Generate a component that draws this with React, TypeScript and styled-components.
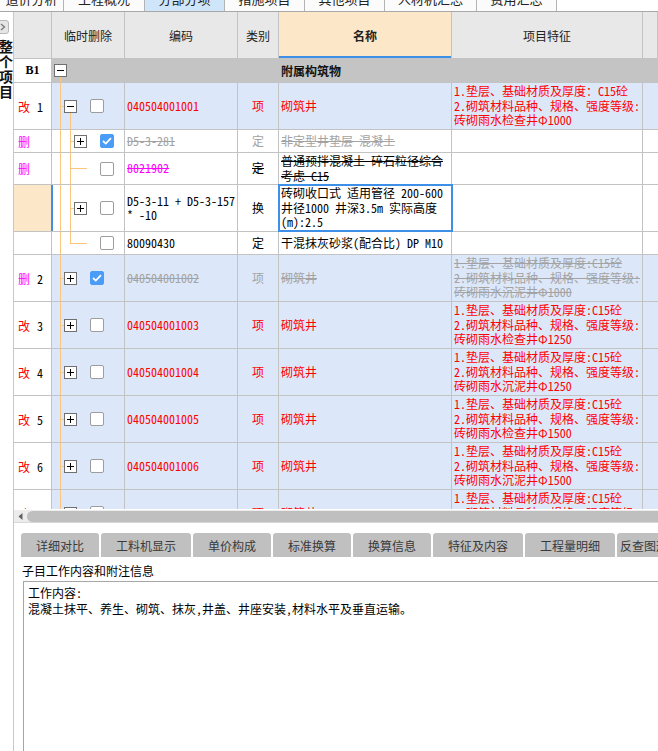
import React from 'react';
import styled, { createGlobalStyle } from 'styled-components';

// CONSTANTS //
const C = {
    line: '#c3c3c3',
    head: '#e8e8e8',
    rowBlue: '#dce8fa',
    peach: '#fde7c9',
    group: '#c4c4c4',
    red: '#ff0000',
    magenta: '#ff00ff',
    gray: '#a3a3a3',
    black: '#000000',
    blue: '#3d8fe8',
    tree: '#fcc77d',
};

const CELL_FONT = '"Noto Sans Mono CJK SC", "Liberation Mono", "Noto Sans CJK SC", monospace';
const UI_FONT = '"Noto Sans CJK SC", "Noto Sans", sans-serif';

type Tone = 'red' | 'gray' | 'black' | 'magenta';
type Tree = 'open' | 'child' | 'leaf' | 'lastLeaf' | 'closed';

interface Row {
    status?: '改' | '删';
    num?: string;
    tree: Tree;
    checked?: boolean;
    code: string[];
    codeTone: Tone;
    type: string;
    typeStrike?: boolean;
    name: string[];
    feat: string[];
    tone: Tone;
    strike?: boolean;
    height: number;
    blue?: boolean;
    current?: boolean;
}

const featLines = (well: string, size: string, full?: boolean) => [
    full ? '1.垫层、基础材质及厚度：C15砼' : '1.垫层、基础材质及厚度:C15砼',
    '2.砌筑材料品种、规格、强度等级:',
    `砖砌雨水${well}井Φ${size}`,
];

const ROWS: Row[] = [
    {
        status: '改', num: '1', tree: 'open', code: ['040504001001'], codeTone: 'red', type: '项',
        name: ['砌筑井'], feat: featLines('检查', '1000', true), tone: 'red', height: 47, blue: true,
    },
    {
        status: '删', tree: 'child', checked: true, code: ['D5-3-281'], codeTone: 'gray', type: '定',
        name: ['非定型井垫层 混凝土'], feat: [], tone: 'gray', strike: true, height: 23,
    },
    {
        status: '删', tree: 'leaf', code: ['8021902'], codeTone: 'magenta', type: '定', typeStrike: true,
        name: ['普通预拌混凝土 碎石粒径综合', '考虑 C15'], feat: [], tone: 'black', strike: true, height: 32,
    },
    {
        tree: 'child', code: ['D5-3-11 + D5-3-157', '* -10'], codeTone: 'black', type: '换',
        name: ['砖砌收口式 适用管径 200-600', '井径1000 井深3.5m  实际高度', '(m):2.5'], feat: [],
        tone: 'black', height: 47, current: true,
    },
    {
        tree: 'lastLeaf', code: ['80090430'], codeTone: 'black', type: '定',
        name: ['干混抹灰砂浆(配合比) DP M10'], feat: [], tone: 'black', height: 23,
    },
    {
        status: '删', num: '2', tree: 'closed', checked: true, code: ['040504001002'], codeTone: 'gray', type: '项',
        name: ['砌筑井'], feat: featLines('沉泥', '1000'), tone: 'gray', strike: true, height: 47, blue: true,
    },
    ...[
        ['3', '检查', '1250'],
        ['4', '沉泥', '1250'],
        ['5', '检查', '1500'],
        ['6', '沉泥', '1500'],
        ['7', '检查', '2000'],
    ].map(([num, well, size]): Row => ({
        status: '改', num, tree: 'closed', code: [`04050400100${num}`], codeTone: 'red', type: '项',
        name: ['砌筑井'], feat: featLines(well, size), tone: 'red', height: 47, blue: true,
    })),
];

const TOP_TABS = [
    { label: '造价分析', width: 64 },
    { label: '工程概况', width: 81 },
    { label: '分部分项', width: 80, active: true },
    { label: '措施项目', width: 80 },
    { label: '其他项目', width: 80 },
    { label: '人材机汇总', width: 92 },
    { label: '费用汇总', width: 80 },
];

const DETAIL_TABS = [
    { label: '详细对比', width: 78 },
    { label: '工料机显示', width: 90 },
    { label: '单价构成', width: 78 },
    { label: '标准换算', width: 78 },
    { label: '换算信息', width: 78 },
    { label: '特征及内容', width: 90 },
    { label: '工程量明细', width: 90 },
    { label: '反查图形工程量', width: 90 },
];

// tree connector lines drawn as cell backgrounds
const treeLines = (kind: Tree | 'group') => {
    const v = (x: number, part: 'full' | 'top' | 'bottom') =>
        `linear-gradient(${C.tree}, ${C.tree}) ${x}px ${part === 'bottom' ? '100%' : '0'} / 1px ${part === 'full' ? '100%' : '50%'} no-repeat`;
    const h = (x: number, w: number) => `linear-gradient(${C.tree}, ${C.tree}) ${x}px 50% / ${w}px 1px no-repeat`;
    switch (kind) {
        case 'group':
            return [v(8, 'bottom')];
        case 'open':
            return [v(8, 'full'), h(8, 4), v(18, 'bottom')];
        case 'child':
            return [v(8, 'full'), v(18, 'full'), h(18, 4)];
        case 'leaf':
            return [v(8, 'full'), v(18, 'full'), h(18, 17)];
        case 'lastLeaf':
            return [v(8, 'full'), v(18, 'top'), h(18, 17)];
        default:
            return [v(8, 'full'), h(8, 4)];
    }
};

const ExpandBox: React.FC<{ open?: boolean }> = ({ open }) => (
    <BoxIcon width="13" height="13" viewBox="0 0 13 13">
        <rect x="0.5" y="0.5" width="12" height="12" fill="#fff" stroke="#707070" />
        <path d="M3 6.5h7" stroke="#000" />
        {!open && <path d="M6.5 3v7" stroke="#000" />}
    </BoxIcon>
);

const Check: React.FC<{ checked?: boolean }> = ({ checked }) => (
    <CheckBox $checked={checked}>
        {checked && (
            <svg width="10" height="8" viewBox="0 0 10 8">
                <path d="M1 4l2.8 2.6L9 1.2" fill="none" stroke="#fff" strokeWidth="1.8" />
            </svg>
        )}
    </CheckBox>
);

const GridRow: React.FC<{ row: Row }> = ({ row }) => {
    const level2 = row.tree !== 'open' && row.tree !== 'closed';
    const hasBox = row.tree === 'open' || row.tree === 'closed' || row.tree === 'child';
    return (
        <RowWrap $height={row.height} $blue={row.blue}>
            <StatusCell $current={row.current}>
                <Status $tone={row.status === '删' ? 'magenta' : 'red'}>{row.status}</Status>
                <RowNum>{row.num}</RowNum>
            </StatusCell>
            <TreeCell $lines={treeLines(row.tree).join(', ')} $indent={level2 ? 22 : 12}>
                {hasBox ? <ExpandBox open={row.tree === 'open'} /> : <BoxSpacer />}
                <Check checked={row.checked} />
            </TreeCell>
            <TextCell>
                <Lines $tone={row.codeTone} $strike={row.strike}>
                    {row.code.map(l => (
                        <div key={l}>{l}</div>
                    ))}
                </Lines>
            </TextCell>
            <TypeCell>
                <Lines $tone={row.tone} $strike={row.typeStrike}>
                    {row.type}
                </Lines>
            </TypeCell>
            <TextCell $selected={row.current}>
                <Lines $tone={row.tone} $strike={row.strike}>
                    {row.name.map(l => (
                        <div key={l}>{l}</div>
                    ))}
                </Lines>
            </TextCell>
            <TextCell>
                <Lines $tone={row.tone} $strike={row.strike}>
                    {row.feat.map(l => (
                        <div key={l}>{l}</div>
                    ))}
                </Lines>
            </TextCell>
            <EndCell />
        </RowWrap>
    );
};

const App: React.FC = () => (
    <>
        <GlobalStyle />
        <Page>
            <TopTabs>
                {TOP_TABS.map(t => (
                    <TopTab key={t.label} $width={t.width} $active={t.active}>
                        <span>{t.label}</span>
                    </TopTab>
                ))}
            </TopTabs>
            <Body>
                <Sidebar>
                    <SideButton>
                        <svg width="6" height="8" viewBox="0 0 6 8">
                            <path d="M1 1l3.5 3L1 7" fill="none" stroke="#777" strokeWidth="1.3" />
                        </svg>
                    </SideButton>
                    <SideTitle>整个项目</SideTitle>
                </Sidebar>
                <Main>
                    <GridView>
                        <HeaderRow>
                            <HeadCell />
                            <HeadCell>临时删除</HeadCell>
                            <HeadCell>编码</HeadCell>
                            <HeadCell>类别</HeadCell>
                            <HeadCell $active>名称</HeadCell>
                            <HeadCell>项目特征</HeadCell>
                            <HeadCell />
                        </HeaderRow>
                        <GroupRow>
                            <GroupCode>B1</GroupCode>
                            <TreeCell $lines={treeLines('group').join(', ')} $indent={2}>
                                <ExpandBox open />
                            </TreeCell>
                            <GroupCell />
                            <GroupCell />
                            <GroupCell>
                                <GroupName>附属构筑物</GroupName>
                            </GroupCell>
                            <GroupCell />
                            <GroupCell />
                        </GroupRow>
                        {ROWS.map((r, i) => (
                            <GridRow key={i} row={r} />
                        ))}
                    </GridView>
                    <HScroll>
                        <ScrollArrow>
                            <svg width="5" height="7" viewBox="0 0 5 7">
                                <path d="M4.5 0v7L0.5 3.5z" fill="#606060" />
                            </svg>
                        </ScrollArrow>
                        <ScrollThumb />
                    </HScroll>
                    <Detail>
                        <DetailTabs>
                            {DETAIL_TABS.map(t => (
                                <DetailTab key={t.label} $width={t.width}>
                                    {t.label}
                                </DetailTab>
                            ))}
                        </DetailTabs>
                        <DetailLabel>子目工作内容和附注信息</DetailLabel>
                        <DetailBox>
                            <div>工作内容:</div>
                            <div>混凝土抹平、养生、砌筑、抹灰,井盖、井座安装,材料水平及垂直运输。</div>
                        </DetailBox>
                    </Detail>
                </Main>
            </Body>
        </Page>
    </>
);

// STYLES //
const GlobalStyle = createGlobalStyle`
    html, body {
        margin: 0;
        padding: 0;
        background: #fff;
    }
    body {
        width: 658px;
        height: 751px;
        overflow: hidden;
        font-family: ${CELL_FONT};
        font-size: 12px;
    }
    * {
        box-sizing: border-box;
    }
`;

const toneColor = (t?: Tone) =>
    t === 'red' ? C.red : t === 'gray' ? C.gray : t === 'magenta' ? C.magenta : C.black;

const Page = styled.div`
    display: flex;
    flex-direction: column;
    width: 658px;
    height: 751px;
    overflow: hidden;
`;

const TopTabs = styled.div`
    display: flex;
    height: 12px;
    flex-shrink: 0;
    border-bottom: 1px solid #a8a8a8;
    overflow: hidden;
`;

const TopTab = styled.div<{ $width: number; $active?: boolean }>`
    width: ${p => p.$width}px;
    flex-shrink: 0;
    display: flex;
    justify-content: center;
    align-items: flex-end;
    overflow: hidden;
    border-right: 1px solid #b4b4b4;
    background: ${p => (p.$active ? '#cfe5fa' : '#fbfbfb')};
    font-family: ${UI_FONT};
    font-size: 13px;
    color: #222;

    span {
        line-height: 20px;
        margin-bottom: 2px;
    }
`;

const Body = styled.div`
    flex: 1;
    display: flex;
    min-height: 0;
`;

const Sidebar = styled.div`
    width: 14px;
    flex-shrink: 0;
    border-right: 1px solid #c8c8c8;
    overflow: hidden;
    display: flex;
    flex-direction: column;
    padding-top: 8px;
`;

const SideButton = styled.div`
    width: 12px;
    height: 14px;
    margin-left: -3px;
    border: 1px solid #b8b8b8;
    border-radius: 3px;
    background: #e6e6e6;
    display: flex;
    align-items: center;
    justify-content: flex-end;
    padding-right: 2px;
`;

const SideTitle = styled.div`
    writing-mode: vertical-rl;
    margin-top: 6px;
    margin-left: -5px;
    font-family: ${UI_FONT};
    font-weight: 700;
    font-size: 14px;
    line-height: 14px;
    letter-spacing: 1px;
    color: #111;
`;

const Main = styled.div`
    flex: 1;
    min-width: 0;
    display: flex;
    flex-direction: column;
`;

const GridView = styled.div`
    height: 497px;
    flex-shrink: 0;
    overflow: hidden;
`;

const COLS = '38px 73px 113px 41px 173px 191px 1fr';

const HeaderRow = styled.div`
    display: grid;
    grid-template-columns: ${COLS};
    height: 47px;
    border-bottom: 1px solid ${C.line};
`;

const HeadCell = styled.div<{ $active?: boolean }>`
    display: flex;
    align-items: center;
    justify-content: center;
    border-right: 1px solid ${C.line};
    background: ${p => (p.$active ? C.peach : C.head)};
    box-shadow: ${p => (p.$active ? `inset 0 -2px 0 ${C.blue}` : 'none')};
    font-family: ${UI_FONT};
    font-size: 12px;
    font-weight: ${p => (p.$active ? 700 : 400)};
    color: #222;
`;

const GroupRow = styled.div`
    display: grid;
    grid-template-columns: ${COLS};
    height: 24px;
    border-bottom: 1px solid ${C.line};
    background: ${C.group};
`;

const GroupCode = styled.div`
    display: flex;
    align-items: center;
    justify-content: center;
    background: #fff;
    border-right: 1px solid ${C.line};
    font-family: 'Liberation Serif', serif;
    font-weight: 700;
    font-size: 12px;
`;

const GroupCell = styled.div`
    display: flex;
    align-items: center;
    padding-left: 2px;
`;

const GroupName = styled.span`
    font-family: ${UI_FONT};
    font-weight: 700;
    font-size: 12px;
    color: #111;
`;

const RowWrap = styled.div<{ $height: number; $blue?: boolean }>`
    display: grid;
    grid-template-columns: ${COLS};
    height: ${p => p.$height}px;
    border-bottom: 1px solid ${C.line};
    background: ${p => (p.$blue ? C.rowBlue : '#fff')};
`;

const StatusCell = styled.div<{ $current?: boolean }>`
    display: flex;
    align-items: center;
    padding-left: 4px;
    background: ${p => (p.$current ? C.peach : '#fff')};
    border-right: ${p => (p.$current ? `2px solid ${C.blue}` : `1px solid ${C.line}`)};
    margin-right: ${p => (p.$current ? '-1px' : '0')};
`;

const Status = styled.span<{ $tone: Tone }>`
    width: 12px;
    color: ${p => toneColor(p.$tone)};
`;

const RowNum = styled.span`
    margin-left: 7px;
    color: #000;
`;

const TreeCell = styled.div<{ $lines: string; $indent: number }>`
    display: flex;
    align-items: center;
    padding-left: ${p => p.$indent}px;
    border-right: 1px solid ${C.line};
    background: ${p => p.$lines};
`;

const BoxIcon = styled.svg`
    display: block;
    flex-shrink: 0;
`;

const BoxSpacer = styled.span`
    width: 13px;
    flex-shrink: 0;
`;

const CheckBox = styled.span<{ $checked?: boolean }>`
    width: 14px;
    height: 14px;
    margin-left: 13px;
    flex-shrink: 0;
    display: flex;
    align-items: center;
    justify-content: center;
    border-radius: 2px;
    border: 1px solid ${p => (p.$checked ? '#4a9cf6' : '#9d9d9d')};
    background: ${p => (p.$checked ? '#4a9cf6' : '#fff')};
`;

const TextCell = styled.div<{ $selected?: boolean }>`
    display: flex;
    align-items: center;
    padding-left: 2px;
    overflow: hidden;
    white-space: nowrap;
    border-right: 1px solid ${C.line};
    outline: ${p => (p.$selected ? `2px solid ${C.blue}` : 'none')};
    outline-offset: -1px;
`;

const TypeCell = styled(TextCell)`
    justify-content: center;
    padding-left: 0;
`;

const EndCell = styled.div``;

const Lines = styled.div<{ $tone: Tone; $strike?: boolean }>`
    line-height: 14.5px;
    color: ${p => toneColor(p.$tone)};
    text-decoration: ${p => (p.$strike ? 'line-through' : 'none')};
`;

const HScroll = styled.div`
    height: 13px;
    flex-shrink: 0;
    display: flex;
    align-items: center;
    border-top: 1px solid #fff;
    background: #ececec;
`;

const ScrollArrow = styled.div`
    width: 13px;
    display: flex;
    justify-content: center;
`;

const ScrollThumb = styled.div`
    flex: 1;
    height: 11px;
    border-radius: 6px 0 0 6px;
    background: #bfbfbf;
`;

const Detail = styled.div`
    flex: 1;
    display: flex;
    flex-direction: column;
    padding: 10px 0 0 7px;
    border-top: 1px solid #d8d8d8;
    min-height: 0;
`;

const DetailTabs = styled.div`
    display: flex;
    gap: 2px;
    height: 24px;
    flex-shrink: 0;
    overflow: hidden;
`;

const DetailTab = styled.div<{ $width: number }>`
    width: ${p => p.$width}px;
    flex-shrink: 0;
    display: flex;
    align-items: center;
    justify-content: center;
    border-radius: 3px 3px 0 0;
    background: #c0c0c0;
    font-family: ${UI_FONT};
    font-size: 12px;
    color: #3a3a3a;
    white-space: nowrap;
`;

const DetailLabel = styled.div`
    margin: 6px 0 0 1px;
    height: 18px;
    font-family: ${UI_FONT};
    font-size: 12px;
    line-height: 16px;
    color: #000;
`;

const DetailBox = styled.div`
    flex: 1;
    margin-left: 2px;
    padding: 3px 4px;
    border-top: 1px solid #a6a6a6;
    border-left: 1px solid #a6a6a6;
    font-size: 12px;
    line-height: 16px;
    color: #000;
`;

export default App;
